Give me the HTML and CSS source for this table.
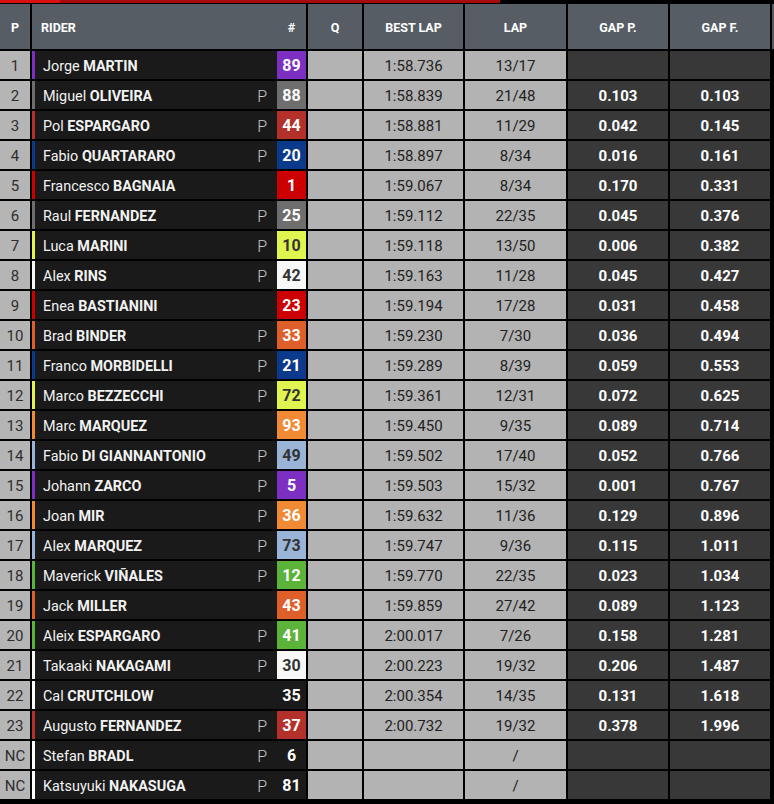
FILE: index.html
```html
<!DOCTYPE html>
<html lang="en">
<head>
    <meta charset="UTF-8">
    <meta name="viewport" content="width=device-width, initial-scale=1.0">
    <title>Live Timing</title>
    <link rel="stylesheet" href="styles.css">
</head>
<body>

    <div class="progress"><div class="progress-fill"></div></div>

    <div class="board-wrap">
    <table class="board">
        <colgroup>
            <col class="w-pos">
            <col class="w-rider">
            <col class="w-q">
            <col class="w-best">
            <col class="w-lap">
            <col class="w-gap">
            <col class="w-gap">
            <col class="w-extra">
        </colgroup>
        <thead>
            <tr>
                <th>P</th>
                <th class="head-rider"><div class="head-rider-cell"><span class="head-label">RIDER</span><span class="head-num">#</span></div></th>
                <th>Q</th>
                <th>BEST LAP</th>
                <th>LAP</th>
                <th>GAP P.</th>
                <th>GAP F.</th>
                <th></th>
            </tr>
        </thead>
        <tbody>
            <tr>
                <td class="pos">1</td>
                <td class="rider"><div class="rider-cell t-purple"><span class="name">Jorge <b>MARTIN</b></span><span class="pit"></span><span class="num">89</span></div></td>
                <td class="q"></td><td class="time">1:58.736</td><td class="time">13/17</td>
                <td class="gap"></td><td class="gap"></td><td class="extra"></td>
            </tr>
            <tr>
                <td class="pos">2</td>
                <td class="rider"><div class="rider-cell t-gray"><span class="name">Miguel <b>OLIVEIRA</b></span><span class="pit">P</span><span class="num">88</span></div></td>
                <td class="q"></td><td class="time">1:58.839</td><td class="time">21/48</td>
                <td class="gap">0.103</td><td class="gap">0.103</td><td class="extra"></td>
            </tr>
            <tr>
                <td class="pos">3</td>
                <td class="rider"><div class="rider-cell t-tech3"><span class="name">Pol <b>ESPARGARO</b></span><span class="pit">P</span><span class="num">44</span></div></td>
                <td class="q"></td><td class="time">1:58.881</td><td class="time">11/29</td>
                <td class="gap">0.042</td><td class="gap">0.145</td><td class="extra"></td>
            </tr>
            <tr>
                <td class="pos">4</td>
                <td class="rider"><div class="rider-cell t-blue"><span class="name">Fabio <b>QUARTARARO</b></span><span class="pit">P</span><span class="num">20</span></div></td>
                <td class="q"></td><td class="time">1:58.897</td><td class="time">8/34</td>
                <td class="gap">0.016</td><td class="gap">0.161</td><td class="extra"></td>
            </tr>
            <tr>
                <td class="pos">5</td>
                <td class="rider"><div class="rider-cell t-red"><span class="name">Francesco <b>BAGNAIA</b></span><span class="pit"></span><span class="num">1</span></div></td>
                <td class="q"></td><td class="time">1:59.067</td><td class="time">8/34</td>
                <td class="gap">0.170</td><td class="gap">0.331</td><td class="extra"></td>
            </tr>
            <tr>
                <td class="pos">6</td>
                <td class="rider"><div class="rider-cell t-gray"><span class="name">Raul <b>FERNANDEZ</b></span><span class="pit">P</span><span class="num">25</span></div></td>
                <td class="q"></td><td class="time">1:59.112</td><td class="time">22/35</td>
                <td class="gap">0.045</td><td class="gap">0.376</td><td class="extra"></td>
            </tr>
            <tr>
                <td class="pos">7</td>
                <td class="rider"><div class="rider-cell t-yellow"><span class="name">Luca <b>MARINI</b></span><span class="pit">P</span><span class="num">10</span></div></td>
                <td class="q"></td><td class="time">1:59.118</td><td class="time">13/50</td>
                <td class="gap">0.006</td><td class="gap">0.382</td><td class="extra"></td>
            </tr>
            <tr>
                <td class="pos">8</td>
                <td class="rider"><div class="rider-cell t-white"><span class="name">Alex <b>RINS</b></span><span class="pit">P</span><span class="num">42</span></div></td>
                <td class="q"></td><td class="time">1:59.163</td><td class="time">11/28</td>
                <td class="gap">0.045</td><td class="gap">0.427</td><td class="extra"></td>
            </tr>
            <tr>
                <td class="pos">9</td>
                <td class="rider"><div class="rider-cell t-red"><span class="name">Enea <b>BASTIANINI</b></span><span class="pit"></span><span class="num">23</span></div></td>
                <td class="q"></td><td class="time">1:59.194</td><td class="time">17/28</td>
                <td class="gap">0.031</td><td class="gap">0.458</td><td class="extra"></td>
            </tr>
            <tr>
                <td class="pos">10</td>
                <td class="rider"><div class="rider-cell t-ktm"><span class="name">Brad <b>BINDER</b></span><span class="pit">P</span><span class="num">33</span></div></td>
                <td class="q"></td><td class="time">1:59.230</td><td class="time">7/30</td>
                <td class="gap">0.036</td><td class="gap">0.494</td><td class="extra"></td>
            </tr>
            <tr>
                <td class="pos">11</td>
                <td class="rider"><div class="rider-cell t-blue"><span class="name">Franco <b>MORBIDELLI</b></span><span class="pit">P</span><span class="num">21</span></div></td>
                <td class="q"></td><td class="time">1:59.289</td><td class="time">8/39</td>
                <td class="gap">0.059</td><td class="gap">0.553</td><td class="extra"></td>
            </tr>
            <tr>
                <td class="pos">12</td>
                <td class="rider"><div class="rider-cell t-yellow"><span class="name">Marco <b>BEZZECCHI</b></span><span class="pit">P</span><span class="num">72</span></div></td>
                <td class="q"></td><td class="time">1:59.361</td><td class="time">12/31</td>
                <td class="gap">0.072</td><td class="gap">0.625</td><td class="extra"></td>
            </tr>
            <tr>
                <td class="pos">13</td>
                <td class="rider"><div class="rider-cell t-orange"><span class="name">Marc <b>MARQUEZ</b></span><span class="pit"></span><span class="num">93</span></div></td>
                <td class="q"></td><td class="time">1:59.450</td><td class="time">9/35</td>
                <td class="gap">0.089</td><td class="gap">0.714</td><td class="extra"></td>
            </tr>
            <tr>
                <td class="pos">14</td>
                <td class="rider"><div class="rider-cell t-lightblue"><span class="name">Fabio <b>DI GIANNANTONIO</b></span><span class="pit">P</span><span class="num">49</span></div></td>
                <td class="q"></td><td class="time">1:59.502</td><td class="time">17/40</td>
                <td class="gap">0.052</td><td class="gap">0.766</td><td class="extra"></td>
            </tr>
            <tr>
                <td class="pos">15</td>
                <td class="rider"><div class="rider-cell t-purple"><span class="name">Johann <b>ZARCO</b></span><span class="pit">P</span><span class="num">5</span></div></td>
                <td class="q"></td><td class="time">1:59.503</td><td class="time">15/32</td>
                <td class="gap">0.001</td><td class="gap">0.767</td><td class="extra"></td>
            </tr>
            <tr>
                <td class="pos">16</td>
                <td class="rider"><div class="rider-cell t-orange"><span class="name">Joan <b>MIR</b></span><span class="pit">P</span><span class="num">36</span></div></td>
                <td class="q"></td><td class="time">1:59.632</td><td class="time">11/36</td>
                <td class="gap">0.129</td><td class="gap">0.896</td><td class="extra"></td>
            </tr>
            <tr>
                <td class="pos">17</td>
                <td class="rider"><div class="rider-cell t-lightblue"><span class="name">Alex <b>MARQUEZ</b></span><span class="pit">P</span><span class="num">73</span></div></td>
                <td class="q"></td><td class="time">1:59.747</td><td class="time">9/36</td>
                <td class="gap">0.115</td><td class="gap">1.011</td><td class="extra"></td>
            </tr>
            <tr>
                <td class="pos">18</td>
                <td class="rider"><div class="rider-cell t-green"><span class="name">Maverick <b>VIÑALES</b></span><span class="pit">P</span><span class="num">12</span></div></td>
                <td class="q"></td><td class="time">1:59.770</td><td class="time">22/35</td>
                <td class="gap">0.023</td><td class="gap">1.034</td><td class="extra"></td>
            </tr>
            <tr>
                <td class="pos">19</td>
                <td class="rider"><div class="rider-cell t-ktm"><span class="name">Jack <b>MILLER</b></span><span class="pit"></span><span class="num">43</span></div></td>
                <td class="q"></td><td class="time">1:59.859</td><td class="time">27/42</td>
                <td class="gap">0.089</td><td class="gap">1.123</td><td class="extra"></td>
            </tr>
            <tr>
                <td class="pos">20</td>
                <td class="rider"><div class="rider-cell t-green"><span class="name">Aleix <b>ESPARGARO</b></span><span class="pit">P</span><span class="num">41</span></div></td>
                <td class="q"></td><td class="time">2:00.017</td><td class="time">7/26</td>
                <td class="gap">0.158</td><td class="gap">1.281</td><td class="extra"></td>
            </tr>
            <tr>
                <td class="pos">21</td>
                <td class="rider"><div class="rider-cell t-white"><span class="name">Takaaki <b>NAKAGAMI</b></span><span class="pit">P</span><span class="num">30</span></div></td>
                <td class="q"></td><td class="time">2:00.223</td><td class="time">19/32</td>
                <td class="gap">0.206</td><td class="gap">1.487</td><td class="extra"></td>
            </tr>
            <tr>
                <td class="pos">22</td>
                <td class="rider"><div class="rider-cell t-none"><span class="name">Cal <b>CRUTCHLOW</b></span><span class="pit"></span><span class="num">35</span></div></td>
                <td class="q"></td><td class="time">2:00.354</td><td class="time">14/35</td>
                <td class="gap">0.131</td><td class="gap">1.618</td><td class="extra"></td>
            </tr>
            <tr>
                <td class="pos">23</td>
                <td class="rider"><div class="rider-cell t-tech3"><span class="name">Augusto <b>FERNANDEZ</b></span><span class="pit">P</span><span class="num">37</span></div></td>
                <td class="q"></td><td class="time">2:00.732</td><td class="time">19/32</td>
                <td class="gap">0.378</td><td class="gap">1.996</td><td class="extra"></td>
            </tr>
            <tr>
                <td class="pos">NC</td>
                <td class="rider"><div class="rider-cell t-none"><span class="name">Stefan <b>BRADL</b></span><span class="pit">P</span><span class="num">6</span></div></td>
                <td class="q"></td><td class="time"></td><td class="time">/</td>
                <td class="gap"></td><td class="gap"></td><td class="extra"></td>
            </tr>
            <tr>
                <td class="pos">NC</td>
                <td class="rider"><div class="rider-cell t-none"><span class="name">Katsuyuki <b>NAKASUGA</b></span><span class="pit">P</span><span class="num">81</span></div></td>
                <td class="q"></td><td class="time"></td><td class="time">/</td>
                <td class="gap"></td><td class="gap"></td><td class="extra"></td>
            </tr>
        </tbody>
    </table>
    </div>

</body>
</html>
```

FILE: styles.css
```css
body {
    margin: 0;
    background-color: #000000;
    font-family: Roboto, 'Liberation Sans', sans-serif;
    overflow: hidden;
}

.progress {
    width: 500px;
    height: 3px;
    background-color: #a80b0b;
}

.progress-fill {
    width: 60px;
    height: 3px;
    background-color: #d9100f;
}

.board-wrap {
    width: 774px;
    overflow: hidden;
}

.board {
    border-collapse: separate;
    border-spacing: 2px;
    table-layout: fixed;
    width: 778px;
    margin-left: -2px;
    margin-top: -1px;
}

.w-pos { width: 30px; }
.w-rider { width: 274px; }
.w-q { width: 54px; }
.w-best { width: 99px; }
.w-lap { width: 101px; }
.w-gap { width: 100px; }
.w-extra { width: 2px; }

th {
    box-sizing: border-box;
    height: 45px;
    padding: 2px 0 0;
    background-color: #575d65;
    color: #ffffff;
    font-size: 12.5px;
    font-weight: 700;
    text-align: center;
}

.head-rider-cell {
    display: flex;
    align-items: center;
}

.head-label {
    flex: 1;
    text-align: left;
    padding-left: 9px;
}

.head-num {
    width: 29px;
    text-align: center;
}

td {
    box-sizing: border-box;
    height: 28px;
    padding: 2px 0 0;
    font-size: 15px;
    text-align: center;
    vertical-align: middle;
}

.pos {
    background-color: #b5b5b5;
    color: #2e2e2e;
}

.rider {
    padding: 0;
    background-color: #1a1a1a;
}

.rider-cell {
    display: flex;
    align-items: center;
    height: 28px;
    border-left: 3px solid var(--team, #ffffff);
}

.name {
    flex: 1;
    padding: 2px 0 0 8px;
    text-align: left;
    color: #f2f2f2;
    font-size: 14.4px;
    white-space: nowrap;
}

.name b {
    font-weight: 700;
}

.pit {
    width: 30px;
    padding: 2px 10px 0 0;
    box-sizing: border-box;
    text-align: right;
    color: #c8c8c8;
    font-size: 16px;
    font-weight: 300;
}

.num {
    width: 29px;
    height: 28px;
    line-height: 30px;
    text-align: center;
    font-size: 16px;
    font-weight: 700;
    background-color: var(--team);
    color: var(--num-text, #ffffff);
}

.q, .time {
    background-color: #b3b3b3;
    color: #222222;
}

.gap {
    background-color: #383838;
    color: #ffffff;
    font-weight: 700;
}

.extra {
    background-color: transparent;
}

/* team colours */
.t-purple { --team: #7d2fc2; }
.t-gray { --team: #6e6e6e; }
.t-tech3 { --team: #b3312a; }
.t-blue { --team: #0b3a8c; }
.t-red { --team: #cc0000; }
.t-yellow { --team: #e0f550; --num-text: #333333; }
.t-white { --team: #f8f8f8; --num-text: #333333; }
.t-ktm { --team: #df5f2a; }
.t-orange { --team: #f08a35; }
.t-lightblue { --team: #9ab4d8; --num-text: #333333; }
.t-green { --team: #5bb33a; }
.t-none { --team: #ffffff; }

.t-none .num { background-color: transparent; }
```
